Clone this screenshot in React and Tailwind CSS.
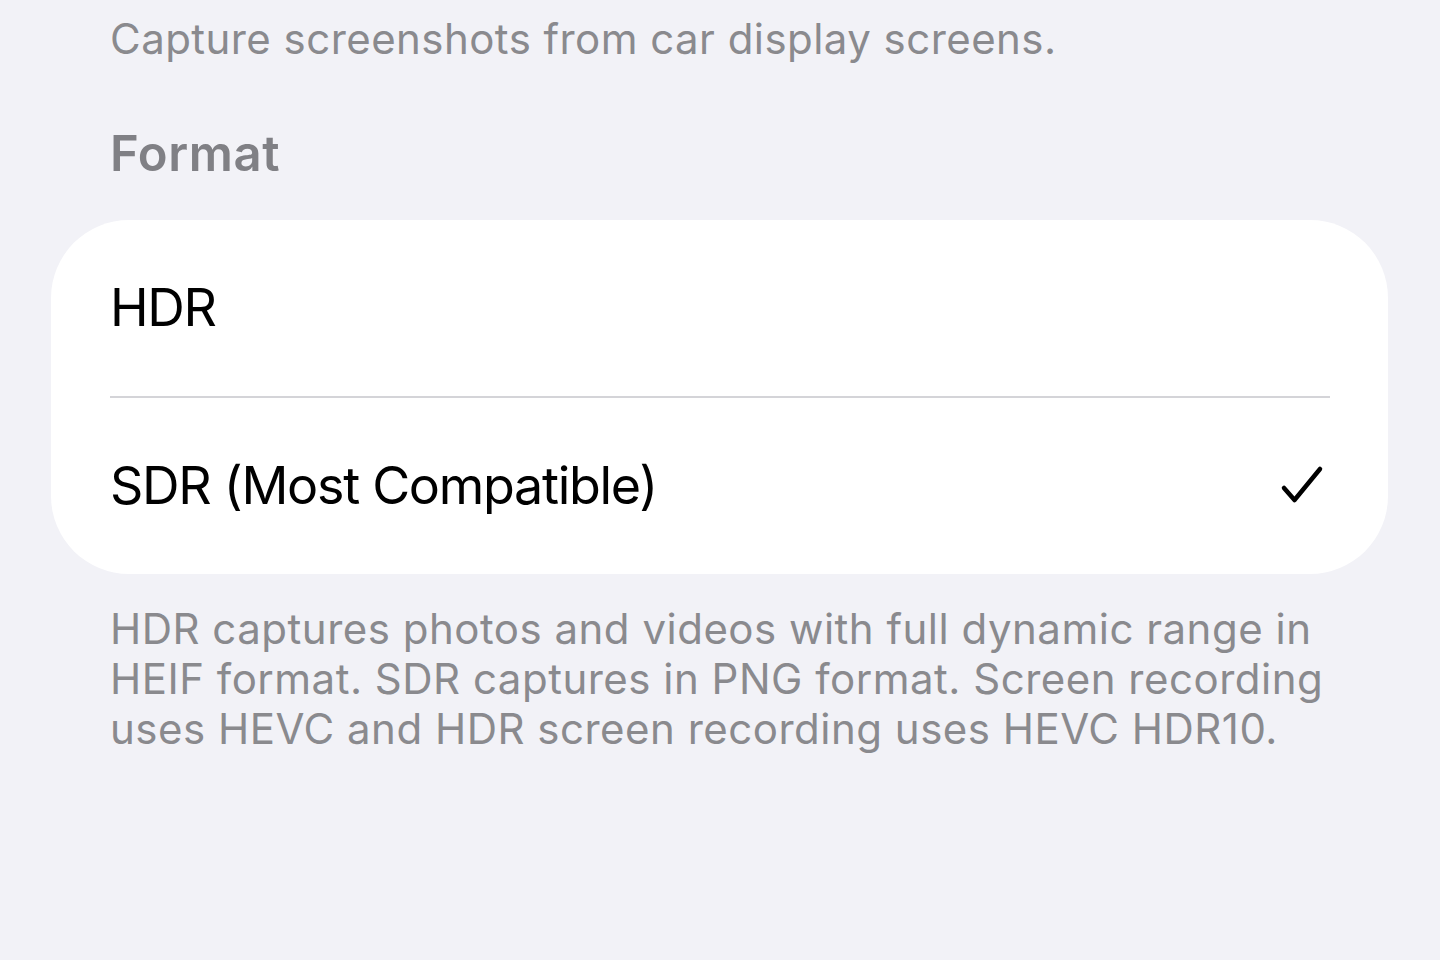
import React from 'react';

const Check = () => (
  <svg width="46" height="46" viewBox="0 0 46 46" fill="none">
    <path d="M4 25 L14.5 37 L40 6" stroke="#000" strokeWidth="4.5" strokeLinecap="round" strokeLinejoin="round" />
  </svg>
);

const Row = ({ label, checked }) => (
  <div className="flex items-center justify-between h-[176px] pl-[59px] pr-[62px]">
    <span className="text-[52px] leading-none text-black tracking-[-1.3px]">{label}</span>
    {checked && <Check />}
  </div>
);

export default function App() {
  return (
    <div className="min-h-[960px] w-[1440px] bg-[#f2f2f7] font-['Inter',_'Noto_Sans',_sans-serif] overflow-hidden">
      <div className="pt-[14px] px-[110px]">
        <p className="text-[42px] leading-[50px] text-[#8a8a8e] tracking-[0.45px]">
          Capture screenshots from car display screens.
        </p>
        <h2 className="mt-[62px] text-[49px] leading-[56px] font-semibold text-[#808085] tracking-[0.6px]">Format</h2>
      </div>

      <div className="mx-[51px] w-[1337px] mt-[38px] bg-white rounded-[78px] overflow-hidden">
        <Row label="HDR" />
        <div className="ml-[59px] mr-[58px] h-[1.5px] bg-[#d4d4d8]"></div>
        <Row label="SDR (Most Compatible)" checked />
      </div>

      <div className="px-[110px] mt-[30px]">
        <p className="text-[42px] leading-[50px] text-[#8a8a8e] tracking-[0.5px] w-[1260px]">
          HDR captures photos and videos with full dynamic range in HEIF format. SDR captures in PNG format. Screen recording uses HEVC and HDR screen recording uses HEVC HDR10.
        </p>
      </div>
    </div>
  );
}
